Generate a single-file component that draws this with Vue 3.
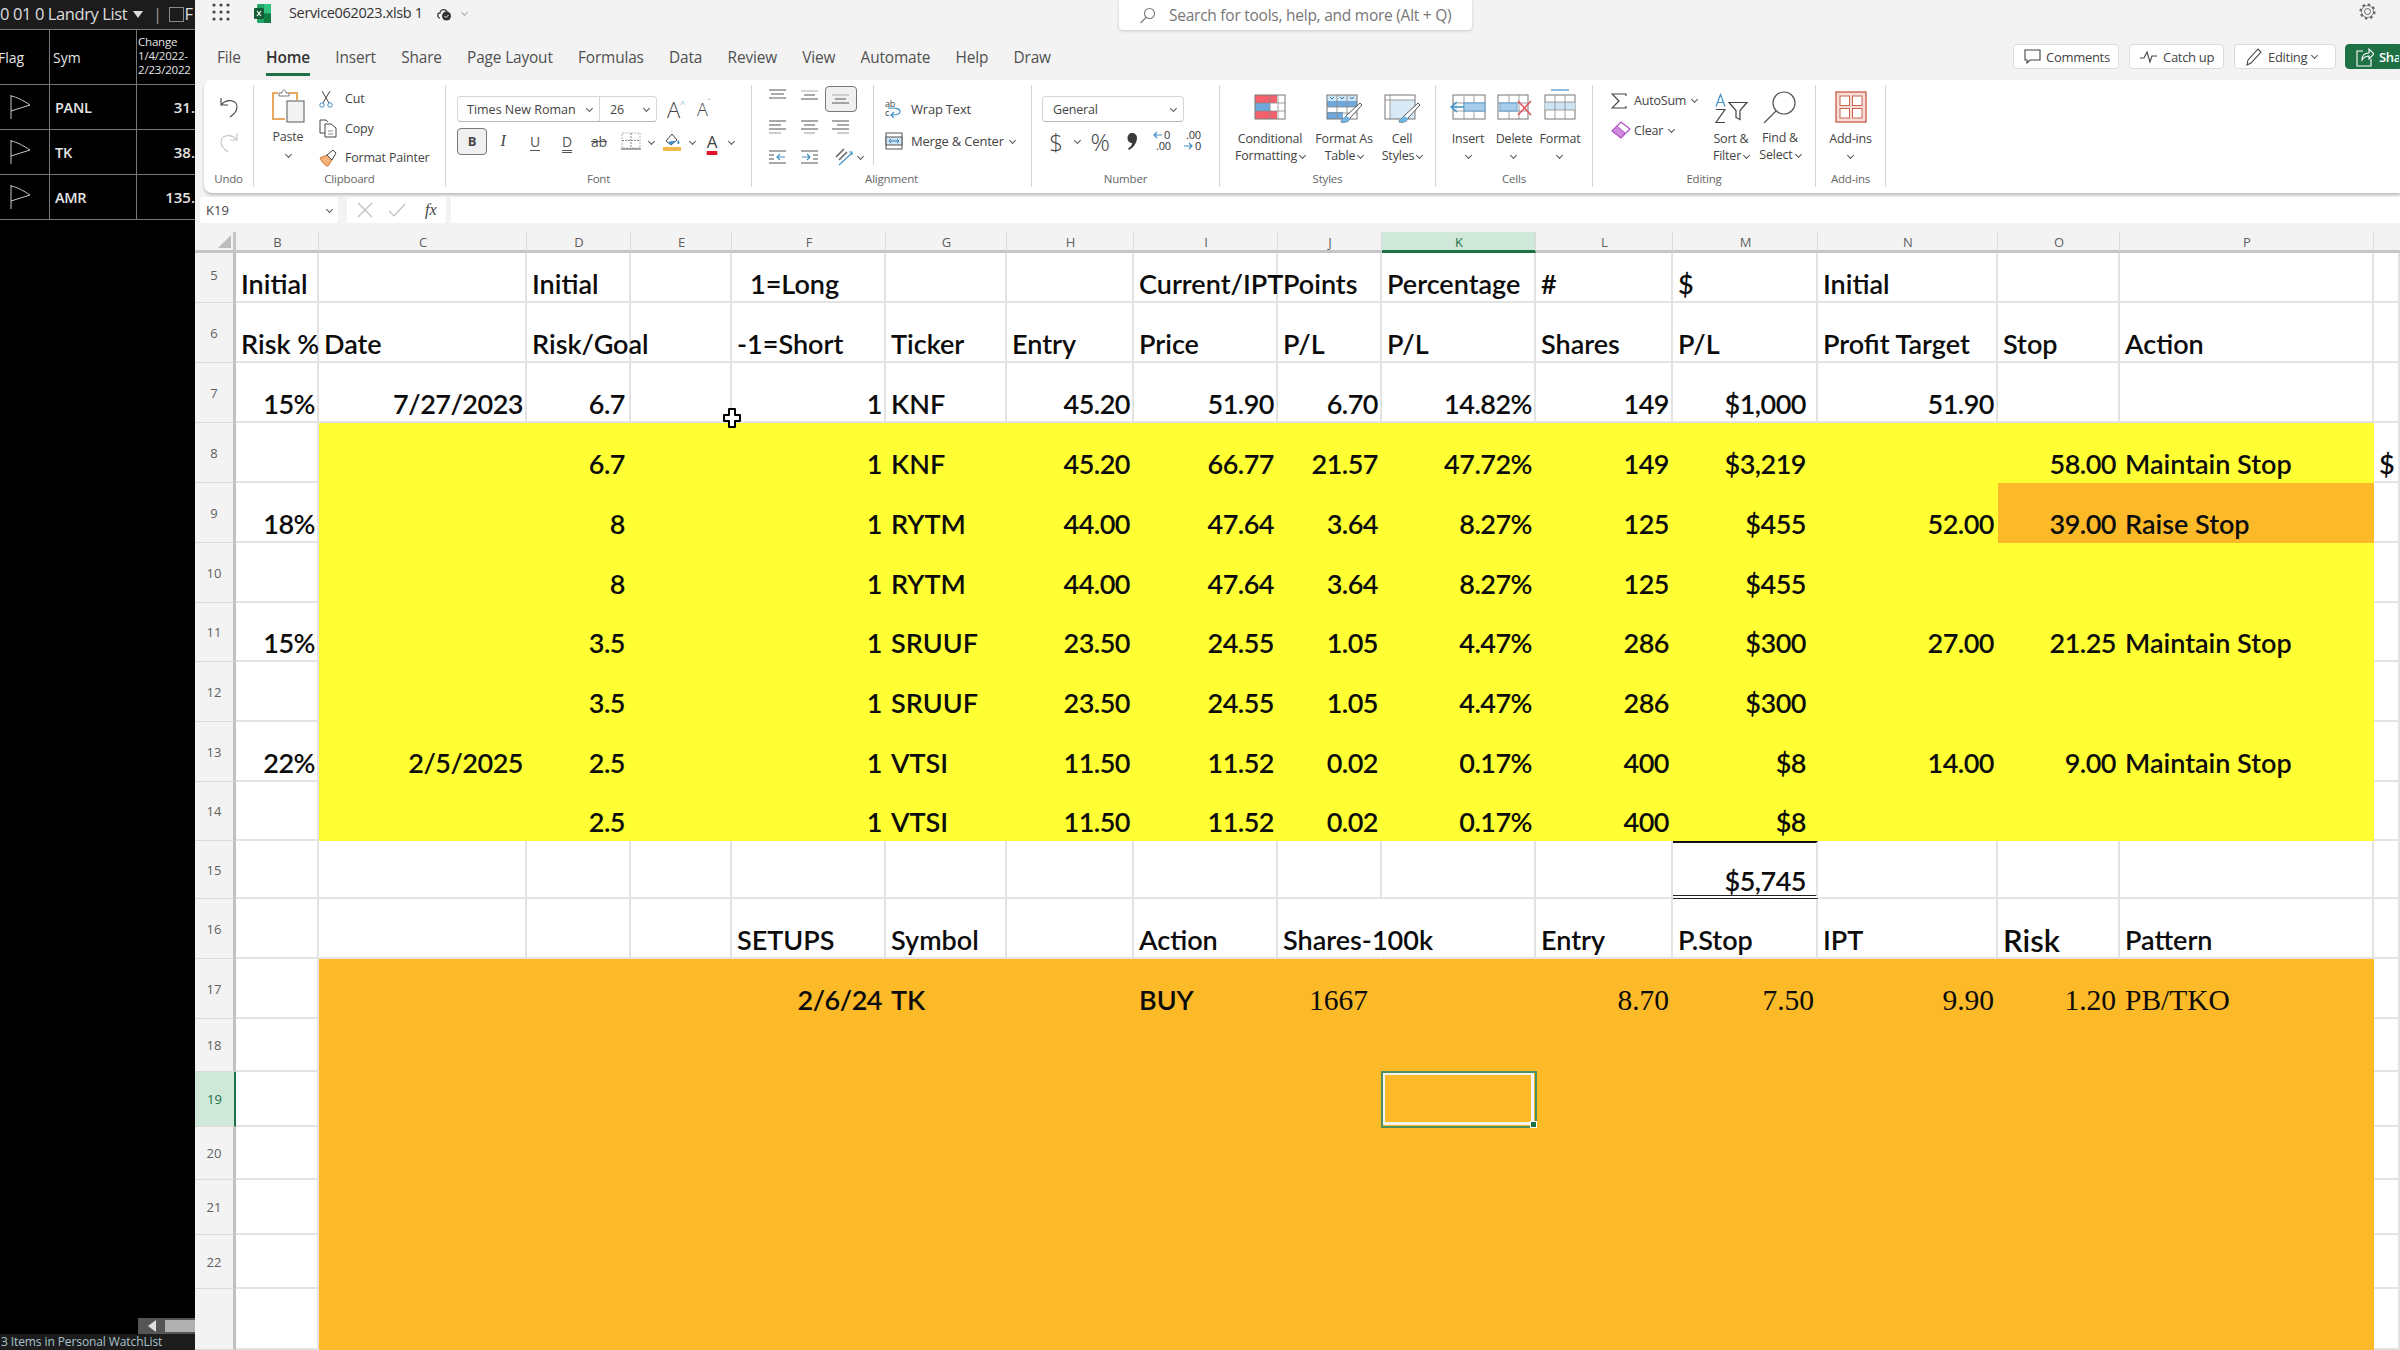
<script setup>
import { computed } from "vue";

const cols = [
	["B", 83], ["C", 208], ["D", 104], ["E", 101], ["F", 154], ["G", 121], ["H", 127], ["I", 144],
	["J", 104], ["K", 154], ["L", 137], ["M", 145], ["N", 180], ["O", 122], ["P", 254], ["Q", 26],
];

const rows = [
	{ n: 5, h: 50, cells: { B: "Initial", D: "Initial", F: "1=Long", I: "Current/IPT", J: "Points", K: "Percentage", L: "#", M: "$", N: "Initial" } },
	{ n: 6, h: 60, cells: { B: "Risk %", C: "Date", D: "Risk/Goal", F: "-1=Short", G: "Ticker", H: "Entry", I: "Price", J: "P/L", K: "P/L", L: "Shares", M: "P/L", N: "Profit Target", O: "Stop", P: "Action" } },
	{ n: 7, h: 60, cells: { B: "15%", C: "7/27/2023", D: "6.7", F: "1", G: "KNF", H: "45.20", I: "51.90", J: "6.70", K: "14.82%", L: "149", M: "$1,000", N: "51.90" } },
	{ n: 8, h: 60, cells: { D: "6.7", F: "1", G: "KNF", H: "45.20", I: "66.77", J: "21.57", K: "47.72%", L: "149", M: "$3,219", O: "58.00", P: "Maintain Stop", Q: "$" } },
	{ n: 9, h: 60, cells: { B: "18%", D: "8", F: "1", G: "RYTM", H: "44.00", I: "47.64", J: "3.64", K: "8.27%", L: "125", M: "$455", N: "52.00", O: "39.00", P: "Raise Stop" } },
	{ n: 10, h: 60, cells: { D: "8", F: "1", G: "RYTM", H: "44.00", I: "47.64", J: "3.64", K: "8.27%", L: "125", M: "$455" } },
	{ n: 11, h: 59, cells: { B: "15%", D: "3.5", F: "1", G: "SRUUF", H: "23.50", I: "24.55", J: "1.05", K: "4.47%", L: "286", M: "$300", N: "27.00", O: "21.25", P: "Maintain Stop" } },
	{ n: 12, h: 60, cells: { D: "3.5", F: "1", G: "SRUUF", H: "23.50", I: "24.55", J: "1.05", K: "4.47%", L: "286", M: "$300" } },
	{ n: 13, h: 60, cells: { B: "22%", C: "2/5/2025", D: "2.5", F: "1", G: "VTSI", H: "11.50", I: "11.52", J: "0.02", K: "0.17%", L: "400", M: "$8", N: "14.00", O: "9.00", P: "Maintain Stop" } },
	{ n: 14, h: 59, cells: { D: "2.5", F: "1", G: "VTSI", H: "11.50", I: "11.52", J: "0.02", K: "0.17%", L: "400", M: "$8" } },
	{ n: 15, h: 58, cells: { M: "$5,745" } },
	{ n: 16, h: 60, cells: { F: "SETUPS", G: "Symbol", I: "Action", J: "Shares-100k", L: "Entry", M: "P.Stop", N: "IPT", O: "Risk", P: "Pattern" } },
	{ n: 17, h: 60, cells: { F: "2/6/24", G: "TK", I: "BUY", J: "1667", L: "8.70", M: "7.50", N: "9.90", O: "1.20", P: "PB/TKO" } },
	{ n: 18, h: 53, cells: {} },
	{ n: 19, h: 55, cells: {} },
	{ n: 20, h: 53, cells: {} },
	{ n: 21, h: 55, cells: {} },
	{ n: 22, h: 54, cells: {} },
	{ n: "", h: 61, cells: {} },
];

const gridStyle = computed(() => ({
	gridTemplateColumns: "41px " + cols.map((c) => c[1] + "px").join(" "),
	gridTemplateRows: "21px " + rows.map((r) => r.h + "px").join(" "),
}));

const serifCells = ["J17", "L17", "M17", "N17", "O17", "P17"];

function isNum(text) {
	return /^\$?[\d,./]+%?$/.test(text || "");
}

function cellClass(row, col) {
	const num = row.n;
	const text = row.cells[col];
	const key = col + num;
	const inFill = col !== "B" && col !== "Q";
	return {
		right: isNum(text),
		money: col === "M" && isNum(text) && (text || "").startsWith("$"),
		goal: col === "D" && isNum(text),
		yellow: inFill && num >= 8 && num <= 14 && key !== "O9" && key !== "P9",
		orange: (inFill && (num >= 17 || num === "")) || key === "O9" || key === "P9",
		serif: serifCells.includes(key),
		indent: key === "F5",
		large: key === "O16",
		shift: key === "J17",
		total: key === "M15",
		sel: key === "K19",
		open: key === "J16",
	};
}

const watchList = [
	{ sym: "PANL", val: "31." },
	{ sym: "TK", val: "38." },
	{ sym: "AMR", val: "135." },
];

const tabs = ["File", "Home", "Insert", "Share", "Page Layout", "Formulas", "Data", "Review", "View", "Automate", "Help", "Draw"];
</script>

<template>
	<div class="page">
		<aside class="watch">
			<div class="watch-title">0 01 0 Landry List <i class="tri"></i> <span class="bar">|</span> <i class="box"></i>F</div>
			<div class="watch-table">
				<div class="wh"><span class="cut">Flag</span></div>
				<div class="wh">Sym</div>
				<div class="wh small">Change<br />1/4/2022-<br />2/23/2022</div>
				<template v-for="w in watchList" :key="w.sym">
					<div class="wc">
						<svg width="22" height="26" viewBox="0 0 22 26"><path d="M2 1V25M2 2C8 3 15 7 21 11C15 13 8 15 2 17" fill="none" stroke="#c8c8c8" stroke-width="1" /></svg>
					</div>
					<div class="wc sym">{{ w.sym }}</div>
					<div class="wc val">{{ w.val }}</div>
				</template>
			</div>
			<div class="watch-fill"></div>
			<div class="watch-scroll"><i class="left-arrow"></i><i class="thumb"></i></div>
			<div class="watch-status">3 Items in Personal WatchList</div>
		</aside>

		<main class="excel">
			<header class="titlebar">
				<div class="title-left">
					<svg class="waffle" width="18" height="18" viewBox="0 0 18 18" fill="#444">
						<circle cx="2" cy="2" r="1.6" /><circle cx="9" cy="2" r="1.6" /><circle cx="16" cy="2" r="1.6" />
						<circle cx="2" cy="9" r="1.6" /><circle cx="9" cy="9" r="1.6" /><circle cx="16" cy="9" r="1.6" />
						<circle cx="2" cy="16" r="1.6" /><circle cx="9" cy="16" r="1.6" /><circle cx="16" cy="16" r="1.6" />
					</svg>
					<svg class="xl" width="17" height="19" viewBox="0 0 17 19">
						<rect x="3" y="0" width="14" height="19" rx="1.5" fill="#21a366" />
						<rect x="10" y="0" width="7" height="9.5" fill="#33c481" />
						<rect x="10" y="9.5" width="7" height="9.5" fill="#107c41" />
						<rect x="0" y="4" width="10" height="11" rx="1" fill="#185c37" />
						<path d="M3 7L7 12M7 7L3 12" stroke="#fff" stroke-width="1.2" />
					</svg>
					<span class="filename">Service062023.xlsb 1</span>
					<svg class="cloud" width="16" height="14" viewBox="0 0 16 14"><path d="M4 11C1 11 1 6 4 6C5 1 11 2 11 6" fill="none" stroke="#444" stroke-width="1.3" /><circle cx="10.5" cy="9" r="4.5" fill="#333" /><path d="M8.5 9l1.5 1.5L12.5 8" fill="none" stroke="#fff" /></svg>
					<i class="chev light"></i>
				</div>
				<div class="search">
					<svg width="17" height="17" viewBox="0 0 17 17"><circle cx="10.5" cy="6.5" r="5" fill="none" stroke="#777" stroke-width="1.1" /><path d="M7 10.5L1.5 16" stroke="#777" stroke-width="1.1" /></svg>
					<span>Search for tools, help, and more (Alt + Q)</span>
				</div>
				<div class="title-right">
					<svg width="19" height="19" viewBox="0 0 19 19"><circle cx="9.5" cy="9.5" r="3" fill="none" stroke="#666" /><circle cx="9.5" cy="9.5" r="7" fill="none" stroke="#666" stroke-width="2.2" stroke-dasharray="2.6 2.9" /><circle cx="9.5" cy="9.5" r="6" fill="none" stroke="#666" stroke-width="0.8" /></svg>
				</div>
			</header>

			<nav class="tabbar">
				<span v-for="t in tabs" :key="t" class="tab" :class="{ active: t === 'Home' }">{{ t }}</span>
				<div class="actions">
					<button class="act w-comments">
						<svg width="17" height="17" viewBox="0 0 17 17"><path d="M1 2H16V12H6L3 15V12H1Z" fill="none" stroke="#444" stroke-width="1.1" /></svg>
						Comments
					</button>
					<button class="act w-catch">
						<svg width="18" height="14" viewBox="0 0 18 14"><path d="M0 8H4L7 2L10 12L12 6H17" fill="none" stroke="#444" stroke-width="1.1" /></svg>
						Catch up
					</button>
					<button class="act w-editing">
						<svg width="18" height="20" viewBox="0 0 18 20"><path d="M2 18L3 13L13 2L16 5L6 16Z" fill="none" stroke="#444" stroke-width="1.1" /></svg>
						Editing <i class="chev"></i>
					</button>
					<button class="act share">
						<svg width="18" height="20" viewBox="0 0 18 20"><path d="M7 4H1V19H15V12M6 13C6 8 9 6 13 6V2L18 7L13 12V9C10 9 8 10 6 13Z" fill="none" stroke="#fff" stroke-width="1.1" /></svg>
						Share
					</button>
				</div>
			</nav>

			<section class="ribbon">
				<div class="group undo">
					<div class="body undo-body">
						<svg width="20" height="22" viewBox="0 0 20 22"><path d="M2 2V9H9M2 9C8 2 18 4 18 11C18 15 14 19 11 21" fill="none" stroke="#444" stroke-width="1.1" /></svg>
						<svg width="20" height="22" viewBox="0 0 20 22"><path d="M18 2V9H11M18 9C12 2 2 4 2 11C2 15 6 19 9 21" fill="none" stroke="#c4c4c4" stroke-width="1.1" /></svg>
					</div>
					<div class="glabel">Undo</div>
				</div>

				<div class="group clip">
					<div class="body clip-body">
						<div class="paste">
							<svg width="34" height="36" viewBox="0 0 34 36">
								<path d="M7 5H2V31H14" fill="none" stroke="#e8a860" stroke-width="2" />
								<path d="M18 5H26V12" fill="none" stroke="#e8a860" stroke-width="2" />
								<path d="M8 8V5H11C11 1 15 1 15 5H18V8Z" fill="#fff" stroke="#777" stroke-width="1" />
								<rect x="16" y="13" width="17" height="21" fill="#f3f3f3" stroke="#666" stroke-width="1.1" />
							</svg>
							<span>Paste</span>
							<i class="chev"></i>
						</div>
						<div class="clip-items">
							<div class="litem">
								<span class="ico"><svg width="14" height="18" viewBox="0 0 14 18"><path d="M3 1L10 13M11 1L4 13" stroke="#444" fill="none" /><circle cx="3" cy="15" r="2.2" fill="none" stroke="#3f8fc4" /><circle cx="11" cy="15" r="2.2" fill="none" stroke="#3f8fc4" /></svg></span>Cut
							</div>
							<div class="litem">
								<span class="ico"><svg width="18" height="19" viewBox="0 0 18 19"><path d="M6 14H1V1H7L9 3" fill="none" stroke="#444" /><path d="M6 5H12L17 9V18H6Z" fill="#fff" stroke="#444" /><path d="M9 12H14M9 15H14" stroke="#888" /></svg></span>Copy
							</div>
							<div class="litem">
								<span class="ico"><svg width="18" height="18" viewBox="0 0 18 18"><path d="M1 9L8 6L13 11L9 17C6 17 3 13 1 9Z" fill="#f2b27a" stroke="#c9702c" /><path d="M8 6L14 1L17 4L13 11Z" fill="#fff" stroke="#444" /></svg></span>Format Painter
							</div>
						</div>
					</div>
					<div class="glabel">Clipboard</div>
				</div>

				<div class="group font">
					<div class="body font-body">
						<div class="tool-row">
							<div class="combo font-combo">
								<span class="combo-name">Times New Roman <i class="chev"></i></span>
								<span class="combo-size">26 <i class="chev"></i></span>
							</div>
							<span class="grow-a">A<sup>^</sup></span>
							<span class="shrink-a">A<sup>ˇ</sup></span>
						</div>
						<div class="tool-row second">
							<span class="tb bold-btn">B</span>
							<span class="tb it">I</span>
							<span class="tb und">U</span>
							<span class="tb dbl">D</span>
							<span class="tb strike">ab</span>
							<span class="tb">
								<svg width="20" height="18" viewBox="0 0 20 18"><rect x="1" y="1" width="18" height="15" fill="none" stroke="#bbb" stroke-dasharray="2 1" /><path d="M10 1V16M1 8.5H19" stroke="#888" stroke-dasharray="2 1" /><path d="M0 17H20" stroke="#555" /></svg>
							</span>
							<i class="chev slim"></i>
							<span class="tb">
								<svg width="22" height="21" viewBox="0 0 22 21"><path d="M5 10L11 3L16 9L10 14Z" fill="#fff" stroke="#444" /><path d="M11 10H15L10 14L7 11Z" fill="#3f8fc4" /><path d="M17 9C19 11 19 13 17 13C16 13 16 11 17 9Z" fill="#3f8fc4" /><rect x="2" y="16" width="18" height="4" fill="#f2b94a" /></svg>
							</span>
							<i class="chev slim"></i>
							<span class="tb font-color">A</span>
							<i class="chev slim"></i>
						</div>
					</div>
					<div class="glabel">Font</div>
				</div>

				<div class="group align">
					<div class="body align-body">
						<div class="align-grid">
							<span class="al"><svg width="18" height="14" viewBox="0 0 18 14"><path d="M0 1H17M2 5H15M0 9H17" stroke="#555" stroke-width="1.2" /><path d="M3 9H14" stroke="#bbb" /></svg></span>
							<span class="al"><svg width="18" height="14" viewBox="0 0 18 14"><path d="M0 2H17" stroke="#bbb" stroke-width="1.2" /><path d="M3 6H14M0 10H17" stroke="#555" stroke-width="1.2" /></svg></span>
							<span class="al sel-btn"><svg width="18" height="12" viewBox="0 0 18 12"><path d="M0 2H17" stroke="#bbb" stroke-width="1.2" /><path d="M3 6H14M0 10H17" stroke="#555" stroke-width="1.2" /></svg></span>
							<span class="al"><svg width="18" height="14" viewBox="0 0 18 14"><path d="M0 1H17M0 5H12M0 9H17" stroke="#555" stroke-width="1.2" /><path d="M0 13H12" stroke="#aaa" stroke-width="1.2" /></svg></span>
							<span class="al"><svg width="18" height="14" viewBox="0 0 18 14"><path d="M0 1H17M3 5H14M0 9H17" stroke="#555" stroke-width="1.2" /><path d="M3 13H14" stroke="#aaa" stroke-width="1.2" /></svg></span>
							<span class="al"><svg width="18" height="14" viewBox="0 0 18 14"><path d="M0 1H17M5 5H17M0 9H17" stroke="#555" stroke-width="1.2" /><path d="M5 13H17" stroke="#aaa" stroke-width="1.2" /></svg></span>
							<span class="al"><svg width="18" height="14" viewBox="0 0 18 14"><path d="M0 1H17M0 13H17M0 5H5M0 9H5" stroke="#555" stroke-width="1.1" /><path d="M16 7H8M11 4L8 7L11 10" fill="none" stroke="#3f8fc4" stroke-width="1.1" /></svg></span>
							<span class="al"><svg width="18" height="14" viewBox="0 0 18 14"><path d="M0 1H17M0 13H17M12 5H17M12 9H17" stroke="#555" stroke-width="1.1" /><path d="M1 7H9M6 4L9 7L6 10" fill="none" stroke="#3f8fc4" stroke-width="1.1" /></svg></span>
							<span class="al orient"><svg width="20" height="20" viewBox="0 0 20 20"><path d="M2 10L10 2M5 13L13 5" stroke="#666" stroke-width="1.6" /><path d="M5 18L18 6M15 5H18V8" fill="none" stroke="#3f8fc4" stroke-width="1.1" /></svg><i class="chev"></i></span>
						</div>
						<div class="wrap-col">
							<div class="litem">
								<span class="ico wide-ico"><svg width="18" height="18" viewBox="0 0 18 18"><path d="M3 8C9 8 15 8 15 11.5C15 15 10 15 7 15M9 12L6 15L9 18" fill="none" stroke="#3f8fc4" stroke-width="1.2" /><text x="0" y="7" font-size="9" fill="#444" font-family="Open Sans, sans-serif">ab</text><text x="0" y="16" font-size="9" fill="#444" font-family="Open Sans, sans-serif">c</text></svg></span>Wrap Text
							</div>
							<div class="litem">
								<span class="ico wide-ico"><svg width="18" height="18" viewBox="0 0 18 18"><rect x="1" y="1" width="16" height="16" fill="#fff" stroke="#555" /><rect x="1" y="5" width="16" height="8" fill="#cfe4f3" stroke="#555" /><path d="M4 9H14M6 7L4 9L6 11M12 7L14 9L12 11" fill="none" stroke="#2f7fb8" /></svg></span>Merge &amp; Center <i class="chev after"></i>
							</div>
						</div>
					</div>
					<div class="glabel">Alignment</div>
				</div>

				<div class="group number">
					<div class="body number-body">
						<div class="combo num-combo"><span>General</span><i class="chev"></i></div>
						<div class="tool-row second num-row">
							<span class="nb w-dollar">$</span>
							<span class="nb w-ch"><i class="chev"></i></span>
							<span class="nb w-pct">%</span>
							<span class="nb w-comma"><svg width="10" height="17" viewBox="0 0 10 17"><path d="M5 0C8 0 10 2 10 5C10 10 6 15 2 17L1 15.5C3.5 14 5 12 5.2 10C2.5 10 0.5 8 0.5 5C0.5 2 2.5 0 5 0Z" fill="#3a3a3a" /></svg></span>
							<span class="nb w-dec"><svg width="24" height="22" viewBox="0 0 24 22"><path d="M10 5H2M5 2L2 5L5 8" fill="none" stroke="#3f8fc4" stroke-width="1.2" /><text x="12" y="9" font-size="11" fill="#333" font-family="Open Sans, sans-serif">0</text><text x="4" y="20" font-size="11" fill="#333" font-family="Open Sans, sans-serif">.00</text></svg></span>
							<span class="nb w-dec"><svg width="24" height="22" viewBox="0 0 24 22"><text x="4" y="9" font-size="11" fill="#333" font-family="Open Sans, sans-serif">.00</text><path d="M2 16H10M7 13L10 16L7 19" fill="none" stroke="#3f8fc4" stroke-width="1.2" /><text x="13" y="20" font-size="11" fill="#333" font-family="Open Sans, sans-serif">0</text></svg></span>
						</div>
					</div>
					<div class="glabel">Number</div>
				</div>

				<div class="group styles">
					<div class="body styles-body">
						<div class="big w-cf">
							<svg width="32" height="26" viewBox="0 0 32 26">
								<rect x="1" y="1" width="15" height="8" fill="#f4606c" /><rect x="1" y="9" width="15" height="8" fill="#6fa8dc" /><rect x="1" y="17" width="22" height="8" fill="#f4606c" />
								<rect x="16" y="1" width="7" height="8" fill="#f4606c" />
								<rect x="1" y="1" width="30" height="24" fill="none" stroke="#777" />
								<path d="M16 1V25M24 1V25M1 9H31M1 17H31" stroke="#888" stroke-width="0.8" />
							</svg>
							<div class="big-text">Conditional<br />Formatting <i class="chev"></i></div>
						</div>
						<div class="big w-fat">
							<svg width="36" height="30" viewBox="0 0 36 30">
								<rect x="1" y="1" width="30" height="6" fill="#cfe4f3" /><rect x="1" y="7" width="30" height="6" fill="#6fa8dc" /><rect x="1" y="18" width="16" height="7" fill="#6fa8dc" />
								<rect x="1" y="1" width="30" height="24" fill="none" stroke="#777" />
								<path d="M11 1V25M21 1V25M1 13H31M1 19H31" stroke="#888" stroke-width="0.8" />
								<path d="M4 3l2 2 2-2M14 3l2 2 2-2M24 3l2 2 2-2" fill="none" stroke="#2f7fb8" />
								<path d="M34 9L20 22C18 25 16 24 15 28C20 29 24 27 24 24L36 11Z" fill="#fff" stroke="#555" />
								<path d="M20 22C18 25 16 24 15 28C20 29 24 27 24 24Z" fill="#6fb6e4" />
							</svg>
							<div class="big-text">Format As<br />Table <i class="chev"></i></div>
						</div>
						<div class="big w-cs">
							<svg width="36" height="30" viewBox="0 0 36 30">
								<rect x="6" y="6" width="25" height="19" fill="#d9e9f5" />
								<rect x="1" y="1" width="30" height="24" fill="none" stroke="#777" />
								<path d="M1 6H31M6 1V25" stroke="#888" stroke-width="0.8" />
								<path d="M34 9L20 22C18 25 16 24 15 28C20 29 24 27 24 24L36 11Z" fill="#fff" stroke="#555" />
								<path d="M20 22C18 25 16 24 15 28C20 29 24 27 24 24Z" fill="#6fb6e4" />
							</svg>
							<div class="big-text">Cell<br />Styles <i class="chev"></i></div>
						</div>
					</div>
					<div class="glabel">Styles</div>
				</div>

				<div class="group cellsg">
					<div class="body cells-body">
						<div class="big w-c">
							<svg width="36" height="26" viewBox="0 0 36 26">
								<rect x="3" y="1" width="32" height="24" fill="#fff" stroke="#777" />
								<path d="M14 1V25M24 1V25M3 9H35M3 17H35" stroke="#888" stroke-width="0.8" />
								<rect x="14" y="9" width="21" height="8" fill="#a8cdea" stroke="#5b9fd0" />
								<path d="M14 13H2M7 8L1 13L7 18" fill="#d5e8f5" stroke="#3f8fc4" stroke-width="1.3" />
							</svg>
							<div class="big-text">Insert<br /><i class="chev"></i></div>
						</div>
						<div class="big w-c">
							<svg width="36" height="26" viewBox="0 0 36 26">
								<rect x="2" y="1" width="30" height="24" fill="#fff" stroke="#777" />
								<path d="M13 1V25M23 1V25M2 9H32M2 17H32" stroke="#888" stroke-width="0.8" />
								<rect x="4" y="9" width="17" height="8" fill="#a8cdea" stroke="#5b9fd0" />
								<path d="M22 7L35 21M35 7L22 21" stroke="#e5555f" stroke-width="1.6" />
							</svg>
							<div class="big-text">Delete<br /><i class="chev"></i></div>
						</div>
						<div class="big w-c fmt">
							<svg width="32" height="32" viewBox="0 0 32 32">
								<path d="M7 2H25" stroke="#3f8fc4" stroke-width="1.2" />
								<rect x="1" y="7" width="30" height="24" fill="#fff" stroke="#777" />
								<rect x="1" y="14" width="30" height="8" fill="#cfe4f3" />
								<path d="M11 7V31M21 7V31M1 14H31M1 22H31" stroke="#888" stroke-width="0.8" />
							</svg>
							<div class="big-text">Format<br /><i class="chev"></i></div>
						</div>
					</div>
					<div class="glabel">Cells</div>
				</div>

				<div class="group editing">
					<div class="body editing-body">
						<div class="edit-small">
							<div class="litem">
								<span class="ico edit-ico"><svg width="16" height="16" viewBox="0 0 16 16"><path d="M15 3V1H1L8 8L1 15H15V13" fill="none" stroke="#444" stroke-width="1.2" /></svg></span>AutoSum <i class="chev after"></i>
							</div>
							<div class="litem">
								<span class="ico edit-ico"><svg width="20" height="18" viewBox="0 0 20 18"><path d="M1 10L10 1L19 8L10 17Z" fill="#fff" stroke="#b14fc5" stroke-width="1.3" /><path d="M1 10L6 5L14 12L10 17Z" fill="#cf86dd" stroke="#b14fc5" /></svg></span>Clear <i class="chev after"></i>
							</div>
						</div>
						<div class="big w-sort">
							<svg width="33" height="30" viewBox="0 0 33 30">
								<path d="M1 13L5.5 1L10 13M3 9H8" fill="none" stroke="#3f8fc4" stroke-width="1.2" />
								<path d="M1 16H10L1 29H10" fill="none" stroke="#444" stroke-width="1.2" />
								<path d="M14 9H32L25 17V26L21 24V17Z" fill="none" stroke="#444" stroke-width="1.2" />
							</svg>
							<div class="big-text">Sort &amp;<br />Filter <i class="chev"></i></div>
						</div>
						<div class="big w-find">
							<svg width="34" height="33" viewBox="0 0 34 33"><circle cx="21" cy="12" r="11" fill="none" stroke="#555" stroke-width="1.2" /><path d="M13 20L1 32" stroke="#555" stroke-width="1.2" /></svg>
							<div class="big-text">Find &amp;<br />Select <i class="chev"></i></div>
						</div>
					</div>
					<div class="glabel">Editing</div>
				</div>

				<div class="group addins">
					<div class="body addins-body">
						<svg width="32" height="32" viewBox="0 0 32 32"><rect x="1" y="1" width="30" height="30" fill="#f7dcd7" stroke="#c9644f" stroke-width="1.4" /><rect x="5" y="5" width="9.5" height="9.5" fill="#fff" stroke="#c9644f" /><rect x="17.5" y="5" width="9.5" height="9.5" fill="#fff" stroke="#c9644f" /><rect x="5" y="17.5" width="9.5" height="9.5" fill="#fff" stroke="#c9644f" /><rect x="17.5" y="17.5" width="9.5" height="9.5" fill="#fff" stroke="#c9644f" /></svg>
						<div class="big-text addins-text">Add-ins<br /><i class="chev"></i></div>
					</div>
					<div class="glabel">Add-ins</div>
				</div>
			</section>

			<div class="formula">
				<div class="namebox"><span>K19</span><i class="chev"></i></div>
				<div class="fxbox">
					<svg width="16" height="16" viewBox="0 0 16 16"><path d="M1 1L15 15M15 1L1 15" stroke="#bdbdbd" stroke-width="1.2" /></svg>
					<svg width="18" height="14" viewBox="0 0 18 14"><path d="M1 8L6 13L17 1" fill="none" stroke="#bdbdbd" stroke-width="1.2" /></svg>
					<span class="fx">fx</span>
				</div>
				<div class="fxinput"></div>
			</div>

			<div class="sheet" :style="gridStyle">
				<div class="corner"><i></i></div>
				<div v-for="c in cols" :key="c[0]" class="colhead" :class="{ on: c[0] === 'K', blank: c[0] === 'Q' }">{{ c[0] === "Q" ? "" : c[0] }}</div>
				<template v-for="row in rows" :key="row.n">
					<div class="rowhead" :class="{ on: row.n === 19, clipped: row.n === 5 }">{{ row.n }}</div>
					<div v-for="c in cols" :key="c[0]" class="cell" :class="cellClass(row, c[0])"><span>{{ row.cells[c[0]] }}</span></div>
				</template>
				<svg class="cursor" width="20" height="22" viewBox="0 0 20 22"><path d="M7 2H13V8H18V14H13V20H7V14H2V8H7Z" fill="#fff" stroke="#000" stroke-width="2" stroke-linejoin="round" /></svg>
			</div>
		</main>
	</div>
</template>

<style>
html, body {
	margin: 0;
	background: #000;
}
</style>

<style scoped>
.page {
	display: flex;
	width: 2400px;
	height: 1350px;
	overflow: hidden;
	font-family: "Open Sans", "Liberation Sans", sans-serif;
}

/* left watch list */
.watch {
	width: 195px;
	flex: none;
	display: flex;
	flex-direction: column;
	background: #000;
	color: #e4e4e4;
	overflow: hidden;
}
.watch-title {
	height: 29px;
	line-height: 27px;
	background: #1c1c1c;
	font-size: 16.5px;
	white-space: nowrap;
	letter-spacing: -0.4px;
	color: #dedede;
}
.tri {
	display: inline-block;
	border-left: 5px solid transparent;
	border-right: 5px solid transparent;
	border-top: 7px solid #ddd;
	margin: 0 3px 2px 2px;
}
.bar {
	color: #999;
	margin: 0 3px;
}
.box {
	display: inline-block;
	width: 13px;
	height: 13px;
	border: 1px solid #888;
	vertical-align: -2px;
	margin-right: 1px;
}
.watch-table {
	display: grid;
	grid-template-columns: 50px 87px 58px;
	grid-template-rows: 55px 45px 45px 45px;
	border-top: 1px solid #777;
}
.wh, .wc {
	border-bottom: 1px solid #777;
	border-right: 1px solid #777;
	display: flex;
	align-items: center;
	font-size: 14px;
	padding-left: 3px;
	box-sizing: border-box;
	white-space: nowrap;
}
.wh.small {
	font-size: 11.5px;
	line-height: 14px;
	display: block;
	padding: 5px 0 0 1px;
	border-right: none;
	letter-spacing: -0.2px;
}
.cut {
	margin-left: -5px;
}
.wc {
	padding-left: 9px;
}
.wc.sym {
	padding-left: 5px;
	font-weight: 600;
	font-size: 14.5px;
	letter-spacing: -0.3px;
}
.wc.val {
	border-right: none;
	justify-content: flex-end;
	padding: 0;
	font-size: 15px;
	font-weight: 600;
}
.watch-fill {
	flex: 1;
}
.watch-scroll {
	height: 16px;
	margin-left: 138px;
	background: #555;
	display: flex;
	align-items: center;
}
.left-arrow {
	border-right: 8px solid #ddd;
	border-top: 6px solid transparent;
	border-bottom: 6px solid transparent;
	margin: 0 9px 0 10px;
}
.thumb {
	flex: 1;
	height: 12px;
	background: #b0b0b0;
}
.watch-status {
	height: 16px;
	background: #1c1c1c;
	color: #a9c2cc;
	font-size: 12px;
	line-height: 16px;
	padding-left: 1px;
	letter-spacing: -0.1px;
	white-space: nowrap;
}

/* excel frame */
.excel {
	flex: 1;
	min-width: 0;
	display: flex;
	flex-direction: column;
	background: #f3f3f3;
	color: #444;
}
.titlebar {
	height: 40px;
	display: grid;
	grid-template-columns: 924px 353px 1fr;
}
.title-left {
	display: flex;
	align-items: flex-start;
	padding: 3px 0 0 17px;
}
.xl {
	margin: 1px 0 0 24px;
}
.filename {
	margin-left: 18px;
	font-size: 14.5px;
	line-height: 20px;
	color: #333;
	letter-spacing: -0.35px;
}
.cloud {
	margin: 4px 10px 0 13px;
}
.title-left .chev {
	margin-top: 7px;
}
.search {
	height: 30px;
	background: #fff;
	border-radius: 0 0 4px 4px;
	box-shadow: 0 1px 3px rgba(0, 0, 0, 0.18);
	display: flex;
	align-items: center;
	padding-left: 20px;
	gap: 13px;
	font-size: 15.5px;
	letter-spacing: -0.25px;
	color: #777;
	white-space: nowrap;
}
.title-right {
	display: flex;
	justify-content: flex-end;
	padding: 2px 23px 0 0;
}
.tabbar {
	height: 40px;
	display: flex;
	align-items: flex-start;
	padding-left: 22px;
	gap: 25.3px;
	font-size: 15.4px;
	white-space: nowrap;
}
.tab {
	line-height: 22px;
	height: 30px;
	margin-top: 7px;
	box-sizing: border-box;
	letter-spacing: -0.15px;
	color: #505050;
}
.tab.active {
	color: #333;
	font-weight: 600;
	border-bottom: 3px solid #1e7145;
	height: 29px;
}
.actions {
	margin-left: auto;
	display: flex;
	gap: 10px;
	padding-top: 4px;
}
.act {
	height: 25px;
	box-sizing: border-box;
	border: 1px solid #dcdcdc;
	border-radius: 4px;
	background: #fff;
	font: inherit;
	font-size: 13px;
	letter-spacing: -0.3px;
	color: #444;
	display: flex;
	align-items: center;
	gap: 5px;
	padding: 0 0 0 10px;
	white-space: nowrap;
}
.act svg {
	flex: none;
}
.w-comments {
	width: 106px;
}
.w-catch {
	width: 95px;
}
.w-editing {
	width: 102px;
	margin-right: -1px;
}
.act.share {
	width: 55px;
	overflow: hidden;
	background: #1e7145;
	border-color: #1e7145;
	border-radius: 4px 0 0 4px;
	color: #fff;
	font-weight: 600;
}

/* ribbon */
.ribbon {
	height: 113px;
	margin-left: 9px;
	box-sizing: border-box;
	padding: 5px 0 6px;
	background: #fff;
	border-radius: 8px 0 0 8px;
	box-shadow: 0 2px 3px rgba(0, 0, 0, 0.22);
	display: flex;
	font-size: 12.5px;
	letter-spacing: -0.2px;
	white-space: nowrap;
	color: #444;
}
.group {
	display: flex;
	flex-direction: column;
	box-sizing: border-box;
	border-right: 1px solid #d4d4d4;
}
.body {
	flex: 1;
	min-height: 0;
	display: flex;
}
.glabel {
	height: 16px;
	line-height: 16px;
	text-align: center;
	font-size: 11.5px;
	color: #666;
}
.undo { width: 50px; }
.clip { width: 192px; }
.font { width: 306px; }
.align { width: 280px; }
.number { width: 188px; }
.styles { width: 216px; }
.cellsg { width: 157px; }
.editing { width: 223px; }
.addins { width: 70px; }

.undo-body {
	flex-direction: column;
	align-items: center;
	padding: 11px 0 0 0;
	gap: 13px;
}
.clip-body {
	padding-left: 17px;
}
.paste {
	width: 34px;
	display: flex;
	flex-direction: column;
	align-items: center;
	padding-top: 3px;
}
.paste span {
	margin-top: 4px;
	line-height: 18px;
}
.paste .chev {
	margin-top: 6px;
}
.clip-items {
	margin: -1px 0 0 14px;
}
.litem {
	height: 29.5px;
	display: flex;
	align-items: center;
	font-size: 12.5px;
}
.ico {
	width: 26px;
	flex: none;
	display: flex;
	align-items: center;
}
.font-body {
	flex-direction: column;
	padding: 11px 0 0 11px;
}
.tool-row {
	display: flex;
	align-items: center;
	height: 26px;
}
.tool-row.second {
	height: 28px;
	margin-top: 5px;
}
.combo {
	box-sizing: border-box;
	height: 26px;
	background: #fff;
	border: 1px solid #d6d6d6;
	border-bottom-color: #b5b5b5;
	border-radius: 4px;
	display: flex;
	align-items: center;
	font-size: 12.5px;
}
.font-combo {
	width: 200px;
}
.combo-name {
	width: 142px;
	box-sizing: border-box;
	padding-left: 9px;
	display: flex;
	justify-content: space-between;
	align-items: center;
	padding-right: 7px;
	border-right: 1px solid #d6d6d6;
	height: 100%;
	letter-spacing: 0;
	font-size: 12.5px;
}
.combo-size {
	flex: 1;
	display: flex;
	justify-content: space-between;
	align-items: center;
	padding: 0 7px 0 10px;
}
.grow-a, .shrink-a {
	font-size: 22px;
	line-height: 26px;
	margin-left: 10px;
	font-weight: 300;
}
.shrink-a {
	font-size: 18px;
	margin-left: 12px;
}
sup {
	font-size: 9px;
	color: #3f8fc4;
	vertical-align: 10px;
	line-height: 0;
}
.tb {
	width: 32px;
	display: flex;
	justify-content: center;
	align-items: center;
	height: 100%;
	font-size: 14px;
	color: #444;
}
.bold-btn {
	width: 30px;
	height: 27px;
	box-sizing: border-box;
	background: #f0f0f0;
	border: 1px solid #777;
	border-radius: 4px;
	font-weight: 700;
	font-size: 13px;
}
.it {
	font-style: italic;
	font-family: "Liberation Serif", serif;
	font-size: 16px;
}
.und {
	text-decoration: underline;
	text-underline-offset: 3px;
	color: #555;
}
.dbl {
	text-decoration: underline double;
	text-underline-offset: 3px;
	color: #555;
}
.strike {
	text-decoration: line-through;
	color: #555;
}
.chev.slim {
	margin: 0 2px;
}
.font-color {
	width: 30px;
	font-size: 17px;
	text-decoration: underline 4px #e0142c;
	text-underline-offset: 3px;
}
.chev {
	display: inline-block;
	width: 4px;
	height: 4px;
	border-right: 1.3px solid #555;
	border-bottom: 1.3px solid #555;
	transform: rotate(45deg);
	margin-bottom: 2px;
	flex: none;
}
.chev.light {
	border-color: #aaa;
}
.chev.after {
	margin-left: 6px;
}

.align-body {
	padding-left: 10px;
}
.align-grid {
	margin-top: -4px;
	width: 95px;
	height: 92px;
	display: grid;
	grid-template-columns: repeat(3, 31.7px);
	grid-template-rows: repeat(3, 30.5px);
}
.al {
	display: flex;
	justify-content: center;
	align-items: center;
}
.sel-btn {
	align-self: end;
	height: 26px;
	box-sizing: border-box;
	background: #f0f0f0;
	border: 1px solid #777;
	border-radius: 4px;
}
.orient {
	gap: 4px;
	margin-right: -14px;
}
.wrap-col {
	height: 80px;
	margin-left: 16px;
	box-sizing: border-box;
	padding: 8px 0 0 11px;
	border-left: 1px solid #d4d4d4;
}
.wrap-col .litem {
	height: 32px;
	font-size: 13px;
}
.number-body {
	flex-direction: column;
	padding: 11px 0 0 10px;
}
.num-combo {
	width: 142px;
	padding: 0 7px 0 10px;
	justify-content: space-between;
}
.num-row {
	margin-top: 7px;
}
.nb {
	display: flex;
	justify-content: center;
	align-items: center;
	height: 100%;
	color: #444;
}
.w-dollar {
	width: 28px;
	font-size: 24px;
	font-weight: 300;
}
.w-ch {
	width: 15px;
}
.w-pct {
	width: 30px;
	font-size: 24px;
	font-weight: 300;
}
.w-comma {
	width: 34px;
}
.w-dec {
	width: 30px;
}
.big {
	display: flex;
	flex-direction: column;
	align-items: center;
	padding-top: 9px;
	box-sizing: border-box;
	position: relative;
}
.big > svg {
	height: 26px;
	flex: none;
	overflow: visible;
}
.big-text {
	margin-top: 10px;
	line-height: 17px;
	text-align: center;
	font-size: 12.5px;
}
.styles-body {
	padding-left: 10px;
}
.w-cf { width: 80px; }
.w-fat { width: 68px; }
.w-cs { width: 48px; }
.w-fat > svg, .w-cs > svg {
	height: 30px;
	margin-bottom: -4px;
}
.cells-body {
	padding-left: 9px;
}
.w-c { width: 46px; }
.fmt {
	padding-top: 3px;
}
.fmt > svg {
	height: 32px;
}
.editing-body {
	padding-left: 18px;
}
.edit-small {
	width: 94px;
	padding-top: 1px;
}
.edit-ico {
	width: 23px;
}
.w-sort {
	width: 52px;
	padding-top: 7px;
}
.w-find {
	width: 46px;
	padding-top: 6px;
}
.w-sort > svg, .w-find > svg {
	height: 33px;
}
.w-sort .big-text, .w-find .big-text {
	margin-top: 5px;
}
.addins-body {
	flex-direction: column;
	align-items: center;
	padding-top: 6px;
}
.addins-text {
	margin-top: 7px;
}

/* formula bar */
.formula {
	height: 26px;
	margin: 4px 0 9px;
	display: flex;
	padding-left: 5px;
	gap: 9px;
}
.namebox {
	width: 138px;
	box-sizing: border-box;
	background: #fff;
	border-radius: 3px;
	display: flex;
	align-items: center;
	justify-content: space-between;
	padding: 0 6px;
	font-size: 13px;
}
.fxbox {
	width: 99px;
	box-sizing: border-box;
	background: #fff;
	border-radius: 3px;
	display: flex;
	align-items: center;
	padding: 0 8px 0 10px;
	gap: 15px;
}
.fx {
	font-family: "Liberation Serif", serif;
	font-style: italic;
	font-size: 16px;
	color: #444;
	margin-left: 4px;
}
.fxinput {
	flex: 1;
	margin-left: -4px;
	background: #fff;
}

/* sheet */
.sheet {
	display: grid;
	flex: 1;
	position: relative;
	background: #fff;
	font-family: Lato, "Liberation Sans", sans-serif;
	overflow: hidden;
}
.corner {
	background: #f3f3f3;
	border-bottom: 3px solid #c6c6c6;
	border-right: 3px solid #c6c6c6;
	box-sizing: border-box;
	position: relative;
}
.corner i {
	position: absolute;
	right: 2px;
	bottom: 2px;
	width: 13px;
	height: 13px;
	background: #bdbdbd;
	clip-path: polygon(100% 0, 100% 100%, 0 100%);
}
.colhead {
	background: #f3f3f3;
	box-sizing: border-box;
	border-bottom: 3px solid #c6c6c6;
	border-right: 1px solid #dadada;
	font-family: "Open Sans", sans-serif;
	font-size: 13px;
	line-height: 20px;
	text-align: center;
	padding-left: 1px;
	color: #5f5f5f;
}
.colhead.on {
	background: #cfe8da;
	border-bottom-color: #1e7145;
	color: #1e7145;
}
.colhead.blank {
	border-right: none;
}
.rowhead {
	background: #f3f3f3;
	box-sizing: border-box;
	border-right: 3px solid #c0c0c0;
	border-bottom: 1px solid #dadada;
	font-family: "Open Sans", sans-serif;
	font-size: 13px;
	color: #5f5f5f;
	display: flex;
	align-items: center;
	justify-content: center;
}
.rowhead.clipped {
	padding-bottom: 6px;
}
.rowhead.on {
	background: #cfe8da;
	border-right: 2px solid #1e7145;
	color: #1e7145;
}
.cell {
	box-sizing: border-box;
	min-width: 0;
	display: flex;
	align-items: flex-end;
	padding: 0 0 0 5px;
	border-right: 2px solid #e3e3e3;
	border-bottom: 2px solid #e3e3e3;
	font-size: 27px;
	font-weight: 600;
	line-height: 34px;
	color: #0c0c0c;
	white-space: nowrap;
}
.cell.right {
	justify-content: flex-end;
	padding: 0 2px 0 0;
	letter-spacing: -0.5px;
}
.cell.money {
	padding-right: 10px;
}
.cell.goal {
	padding-right: 4px;
}
.cell.yellow {
	background: #ffff33;
	border-color: #ffff33;
}
.cell.orange {
	background: #fcb928;
	border-color: #fcb928;
}
.cell.serif {
	font-family: "Liberation Serif", serif;
	font-weight: 400;
	font-size: 29.5px;
	letter-spacing: 0;
}
.cell.indent {
	padding-left: 18px;
}
.cell.large {
	font-size: 31px;
}
.cell.shift {
	padding-right: 12px;
}
.cell.total {
	border-top: 2px solid #111;
	border-bottom: 4px double #222;
	line-height: 28px;
}
.cell.open {
	border-right-color: transparent;
}
.cell.sel {
	position: relative;
	box-shadow: inset 0 0 0 3px #f4f4f4;
	outline: 2px solid #4f8f5b;
	outline-offset: -1px;
}
.cell.sel::after {
	content: "";
	position: absolute;
	right: -3px;
	bottom: -3px;
	width: 5px;
	height: 5px;
	background: #1e7145;
	border: 1px solid #fff;
}
.cursor {
	position: absolute;
	left: 527px;
	top: 175px;
}
</style>
